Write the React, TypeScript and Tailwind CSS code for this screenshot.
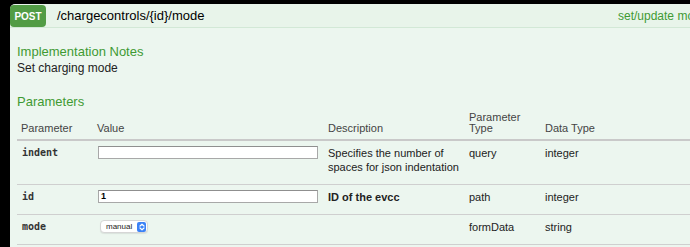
import React from 'react';

const cols = 'grid grid-cols-[77px_230px_141px_76px_1fr]';

const Row = ({
  name,
  value,
  desc,
  bold,
  type,
  dataType,
}: {
  name: string;
  value: React.ReactNode;
  desc?: React.ReactNode;
  bold?: boolean;
  type: string;
  dataType: string;
}) => (
  <div className={`${cols} border-b border-[#cfcfcf] text-[11px] leading-[14px] text-[#222]`}>
    <div className="pl-[5px] pt-[5px] pb-[10px] font-['DejaVu_Sans_Mono',monospace] text-[10px] font-bold text-[#333]">
      {name}
    </div>
    <div className="pl-[4px] pt-[5px] pb-[10px]">{value}</div>
    <div className={`pl-[4px] pt-[5px] pb-[10px] ${bold ? 'font-bold' : ''}`}>{desc}</div>
    <div className="pl-[4px] pt-[5px] pb-[10px]">{type}</div>
    <div className="pl-[4px] pt-[5px] pb-[10px]">{dataType}</div>
  </div>
);

const TextBox = ({ value }: { value?: string }) => (
  <div className="flex h-[13px] w-[220px] items-center border border-[#a8a8a8] border-t-[#8f8f8f] bg-white pl-[2px] text-[9px] font-bold leading-none text-black">
    {value}
  </div>
);

const ModeSelect = () => (
  <div className="ml-[2px] flex h-[13px] w-[48px] items-center justify-between rounded-[4px] border border-[#d6d6d6] bg-white pl-[5px] pr-[1px] shadow-[0_1px_1px_rgba(0,0,0,0.08)]">
    <span className="text-[8px] leading-none text-[#222]">manual</span>
    <span className="flex h-[10px] w-[9px] items-center justify-center rounded-[2px] bg-[#3b82f6]">
      <svg width="6" height="8" viewBox="0 0 6 8" fill="none" stroke="white" strokeWidth="1.2" strokeLinecap="round" strokeLinejoin="round">
        <path d="M1 3 L3 1.2 L5 3" />
        <path d="M1 5 L3 6.8 L5 5" />
      </svg>
    </span>
  </div>
);

export default function App() {
  return (
    <div className="h-[247px] w-[690px] overflow-hidden bg-black pl-[10px] pt-[4px] font-['Liberation_Sans',Arial,sans-serif]">
      <div className="w-[740px]">
        {/* heading */}
        <div className="flex h-[24px] items-start rounded-tl-[5px] border-b border-[#d2e8d6] bg-[#e8f4ea]">
          <div className="mt-[1px] flex h-[22px] w-[36px] items-center justify-center rounded-[4px] bg-[#529c45] text-[10px] font-bold text-white">
            POST
          </div>
          <div className="ml-[11px] w-[561px] pt-[4px] text-[13px] leading-[16px] text-black">
            /chargecontrols/{'{id}'}/mode
          </div>
          <div className="pt-[5px] text-[12px] leading-[14px] text-[#3f9a33]">set/update mode</div>
        </div>

        {/* content */}
        <div className="h-[240px] bg-[#ecf6ef] pl-[7px] pt-[16px]">
          <h4 className="text-[13px] leading-[16px] text-[#3f9a33]">Implementation Notes</h4>
          <p className="mt-[1px] text-[12px] leading-[15px] text-[#222]">Set charging mode</p>

          <h4 className="mt-[18px] text-[13px] leading-[16px] text-[#3f9a33]">Parameters</h4>

          <div className={`${cols} mt-[1px] h-[30px] items-end border-b-2 border-[#c9c9c9] pb-[5px] text-[11px] leading-[11px] text-[#444]`}>
            <div className="pl-[4px]">Parameter</div>
            <div className="pl-[3px]">Value</div>
            <div className="pl-[4px]">Description</div>
            <div className="pl-[4px]">
              Parameter
              <br />
              Type
            </div>
            <div className="pl-[4px]">Data Type</div>
          </div>

          <Row
            name="indent"
            value={<TextBox />}
            desc={
              <>
                Specifies the number of
                <br />
                spaces for json indentation
              </>
            }
            type="query"
            dataType="integer"
          />
          <Row name="id" value={<TextBox value="1" />} desc="ID of the evcc" bold type="path" dataType="integer" />
          <Row name="mode" value={<ModeSelect />} type="formData" dataType="string" />
        </div>
      </div>
    </div>
  );
}
